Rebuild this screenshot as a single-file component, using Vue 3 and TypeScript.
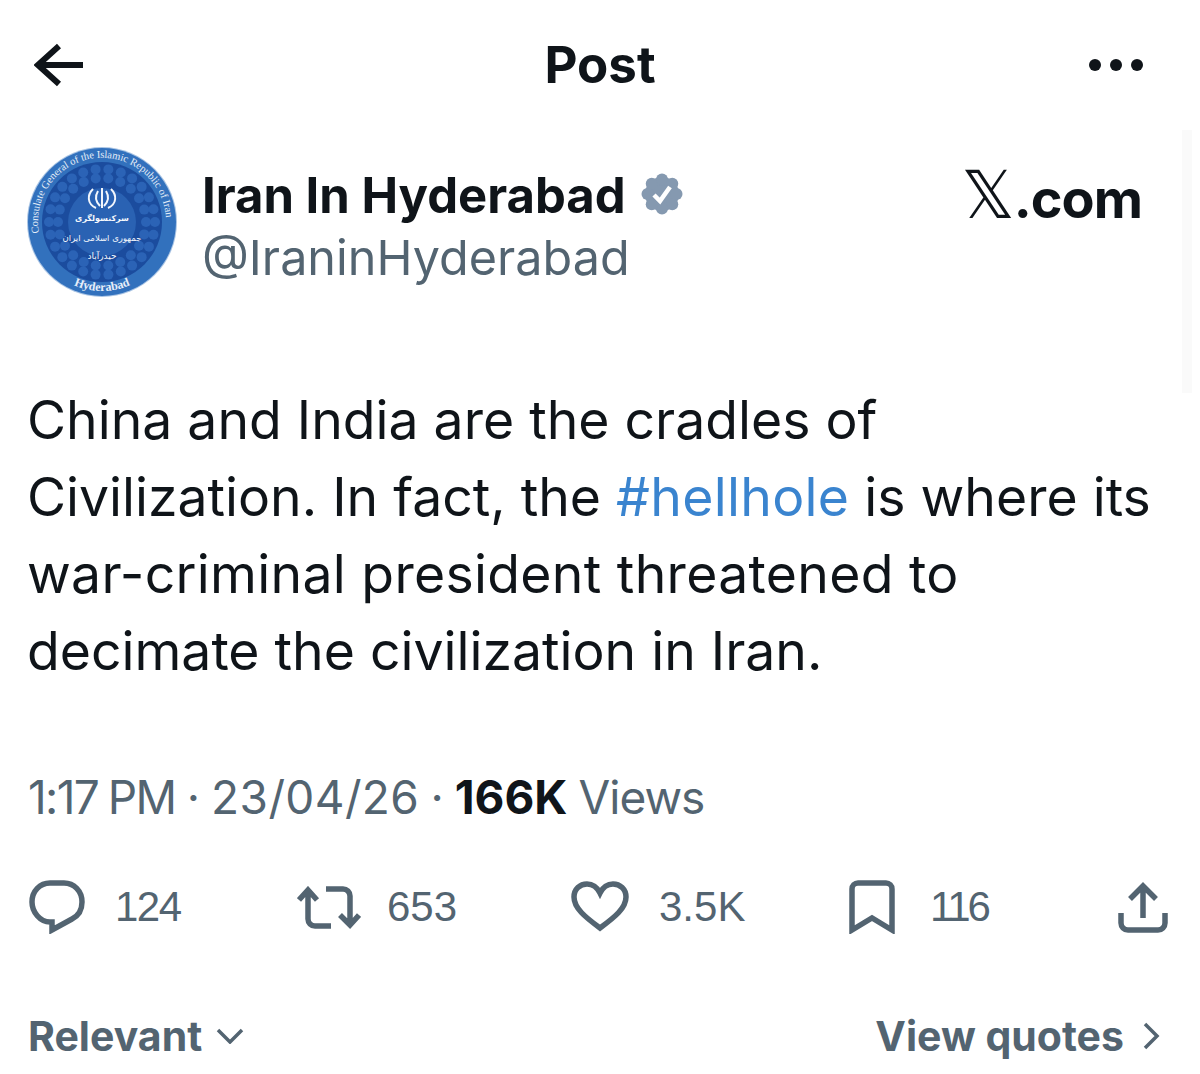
<template>
  <div class="page">
    <header class="topbar">
      <svg class="back" viewBox="0 0 50 44" width="50" height="44">
        <path d="M49 22H4M25 3 4 22l21 19" fill="none" stroke="#0f1419" stroke-width="6" />
      </svg>
      <div class="title">Post</div>
      <div class="dots"><span></span><span></span><span></span></div>
    </header>

    <section class="author">
      <svg class="avatar" viewBox="0 0 150 150" width="150" height="150">
        <defs>
          <path id="arc-top" d="M12 86A64 64 0 1 1 138 86" />
          <path id="arc-bottom" d="M30.6 127.9A69 69 0 0 0 119.4 127.9" />
        </defs>
        <circle cx="75" cy="75" r="75" fill="#a9c4e4" />
        <circle cx="75" cy="75" r="74" fill="#3271bd" />
        <circle cx="75" cy="75" r="60" fill="#1b4c9e" />
        <circle
          v-for="dot in petals"
          :key="dot.id"
          :cx="dot.x"
          :cy="dot.y"
          :r="dot.r"
          fill="#2b63b6"
        />
        <circle cx="75" cy="75" r="34" fill="#2a62b3" />
        <text class="rim" font-size="10.5" fill="#e4edf8"><textPath href="#arc-top" textLength="208" lengthAdjust="spacing">Consulate General of the Islamic Republic of Iran</textPath></text>
        <text class="rim" font-size="12" font-weight="700" fill="#e6eef9" text-anchor="middle"><textPath href="#arc-bottom" startOffset="50%">Hyderabad</textPath></text>
        <path d="M75 41v20M71 44c-3 5-3 10 2 15M79 44c3 5 3 10-2 15M66 42c-6 6-6 15 3 19M84 42c6 6 6 15-3 19" fill="none" stroke="#f2f6fc" stroke-width="2" />
        <text class="fa" x="75" y="74" font-size="8" font-weight="700" text-anchor="middle" fill="#f4f7fc">سرکنسولگری</text>
        <text class="fa" x="75" y="94" font-size="8.5" text-anchor="middle" fill="#f4f7fc">جمهوری اسلامی ایران</text>
        <text class="fa" x="75" y="112" font-size="9" text-anchor="middle" fill="#f4f7fc">حیدرآباد</text>
      </svg>

      <div class="names">
        <div class="name-row">
          <span class="name">Iran In Hyderabad</span>
          <svg class="badge" viewBox="0 0 42 42" width="42" height="42">
            <g fill="#8599b0">
              <circle cx="21" cy="21" r="17" />
              <circle v-for="bump in bumps" :key="bump.id" :cx="bump.x" :cy="bump.y" :r="bump.r" />
            </g>
            <path d="M13 22l6 6 10-14" fill="none" stroke="#fff" stroke-width="4.5" />
          </svg>
        </div>
        <div class="handle">@IraninHyderabad</div>
      </div>

      <div class="brand"><span class="brand-x">𝕏</span>.com</div>
    </section>

    <p class="body">
      China and India are the cradles of<br />
      Civilization. In fact, the <span class="tag">#hellhole</span> is where its<br />
      <span class="wide">war-criminal president threatened to</span><br />
      decimate the civilization in Iran.
    </p>

    <div class="meta"><span class="time">1:17 PM</span> · <span class="date">23/04/26</span> · <b>166K</b> <span class="views">Views</span></div>

    <div class="actions">
      <div class="action reply">
        <svg viewBox="0 0 56 54" width="56" height="54">
          <path d="M21 3h14c10 0 18 8 18 19 0 8-4 14-10 17L23 50v-8h-2C11 42 3 32 3 22 3 11 11 3 21 3z" fill="none" stroke="#536471" stroke-width="5.5" />
        </svg>
        <span>124</span>
      </div>
      <div class="action retweet">
        <svg viewBox="0 0 64 43" width="64" height="43">
          <path d="M11 4v29a7 7 0 0 0 7 7h16M2 14l9-10 9 10" fill="none" stroke="#536471" stroke-width="5.5" />
          <path d="M29 3h17a7 7 0 0 1 7 7v29M43 29l10 10 9-10" fill="none" stroke="#536471" stroke-width="5.5" />
        </svg>
        <span>653</span>
      </div>
      <div class="action like">
        <svg viewBox="0 0 58 52" width="58" height="52">
          <path d="M29 47C14 36 3 27 3 16 3 8 9 3 16 3c6 0 10 3 13 9 3-6 7-9 13-9 7 0 13 5 13 13 0 11-11 20-26 31z" fill="none" stroke="#536471" stroke-width="5.5" />
        </svg>
        <span>3.5K</span>
      </div>
      <div class="action bookmark">
        <svg viewBox="0 0 46 54" width="46" height="54">
          <path d="M3 50V9a6 6 0 0 1 6-6h28a6 6 0 0 1 6 6v41L23 38z" fill="none" stroke="#536471" stroke-width="5.5" />
        </svg>
        <span>116</span>
      </div>
      <svg class="share" viewBox="0 0 50 51" width="50" height="51">
        <path d="M25 36V4M12 17 25 4l13 13M3 31v10a7 7 0 0 0 7 7h30a7 7 0 0 0 7-7V31" fill="none" stroke="#536471" stroke-width="5.5" />
      </svg>
    </div>

    <footer class="foot">
      <div class="foot-item">
        Relevant
        <svg viewBox="0 0 28 16" width="28" height="16"><path d="M2 2l12 12L26 2" fill="none" stroke="#536471" stroke-width="3.5" /></svg>
      </div>
      <div class="foot-item quotes">
        View quotes
        <svg viewBox="0 0 17 28" width="17" height="28"><path d="M2 2l12 12L2 26" fill="none" stroke="#536471" stroke-width="3.5" /></svg>
      </div>
    </footer>

    <div class="scroll-thumb"></div>
  </div>
</template>

<script setup lang="ts">
interface Dot {
  id: string;
  x: number;
  y: number;
  r: number;
}

const ringDots = (cx: number, radius: number, count: number, r: number, ring: string): Dot[] =>
  Array.from({ length: count }, (_, i) => {
    const angle = (i / count) * Math.PI * 2;
    return {
      id: `${ring}-${i}`,
      x: cx + radius * Math.cos(angle),
      y: cx + radius * Math.sin(angle),
      r
    };
  });

// petals round the seal, and the scallops of the verified badge
const petals = [...ringDots(75, 53, 26, 5, 'a'), ...ringDots(75, 44, 22, 5, 'b')];
const bumps = ringDots(21, 14.5, 8, 6, 'c');
</script>

<style scoped>
.page {
  position: relative;
  width: 1200px;
  height: 1074px;
  overflow: hidden;
  background: #fff;
  color: #0f1419;
  font-family: Inter, "Liberation Sans", sans-serif;
  box-sizing: border-box;
}

.topbar {
  display: grid;
  grid-template-columns: 1fr auto 1fr;
  align-items: center;
  padding: 34px 34px 0;
}

.back {
  display: block;
}

.title {
  font-size: 51px;
  font-weight: 700;
  line-height: 62px;
}

.dots {
  display: flex;
  justify-content: flex-end;
  gap: 9px;
  padding-right: 23px;
}

.dots span {
  width: 12px;
  height: 12px;
  border-radius: 50%;
  background: #0f1419;
}

.author {
  display: flex;
  align-items: flex-start;
  margin-top: 51px;
  padding: 0 58px 0 27px;
}

.avatar {
  flex: none;
}

.rim {
  font-family: "Liberation Serif", serif;
}

.fa {
  font-family: "DejaVu Sans", sans-serif;
}

.names {
  flex: 1;
  margin-left: 25px;
  padding-top: 18px;
}

.name-row {
  display: flex;
  align-items: center;
  gap: 15px;
  height: 60px;
}

.name {
  font-size: 49px;
  font-weight: 700;
}

.badge {
  flex: none;
  margin-top: -3px;
}

.handle {
  margin-top: 3px;
  font-size: 48.5px;
  color: #536471;
}

.brand {
  margin-top: 13px;
  font-size: 54px;
  font-weight: 700;
  letter-spacing: -1px;
  line-height: 72px;
}

.brand-x {
  font-family: "DejaVu Sans", sans-serif;
  font-size: 66px;
  font-weight: 400;
}

.body {
  margin: 84px 0 0;
  padding-left: 27px;
  font-size: 53.5px;
  line-height: 77px;
  white-space: nowrap;
}

.tag {
  color: #3a84cf;
  letter-spacing: 0.3px;
}

.wide {
  letter-spacing: 0.3px;
}

.meta {
  margin-top: 80px;
  padding-left: 28px;
  font-size: 46px;
  word-spacing: -1.8px;
  color: #536471;
}

.time {
  letter-spacing: -1.6px;
}

.date {
  letter-spacing: 0.4px;
}

.views {
  letter-spacing: -1px;
}

.meta b {
  color: #0f1419;
}

.actions {
  display: grid;
  grid-template-columns: 268px 274px 278px 269px 50px;
  align-items: center;
  margin-top: 55px;
  padding-left: 29px;
}

.action {
  display: flex;
  align-items: center;
  gap: 30px;
  font-family: "Liberation Sans", sans-serif;
  font-size: 42px;
  color: #536471;
}

.reply span {
  letter-spacing: -1.5px;
}

.retweet {
  gap: 26px;
}

.bookmark {
  gap: 35px;
}

.bookmark span {
  letter-spacing: -3px;
}

.foot {
  display: flex;
  justify-content: space-between;
  margin-top: 77px;
  padding: 0 40px 0 28px;
}

.foot-item {
  display: flex;
  align-items: center;
  gap: 14px;
  font-size: 41px;
  font-weight: 700;
  color: #536471;
}

.quotes {
  gap: 19px;
}

/* faint scroll indicator down the right edge */
.scroll-thumb {
  position: absolute;
  top: 130px;
  right: 8px;
  width: 10px;
  height: 263px;
  background: #fafafa;
}
</style>

<style>
body {
  background: #fff;
}
</style>
